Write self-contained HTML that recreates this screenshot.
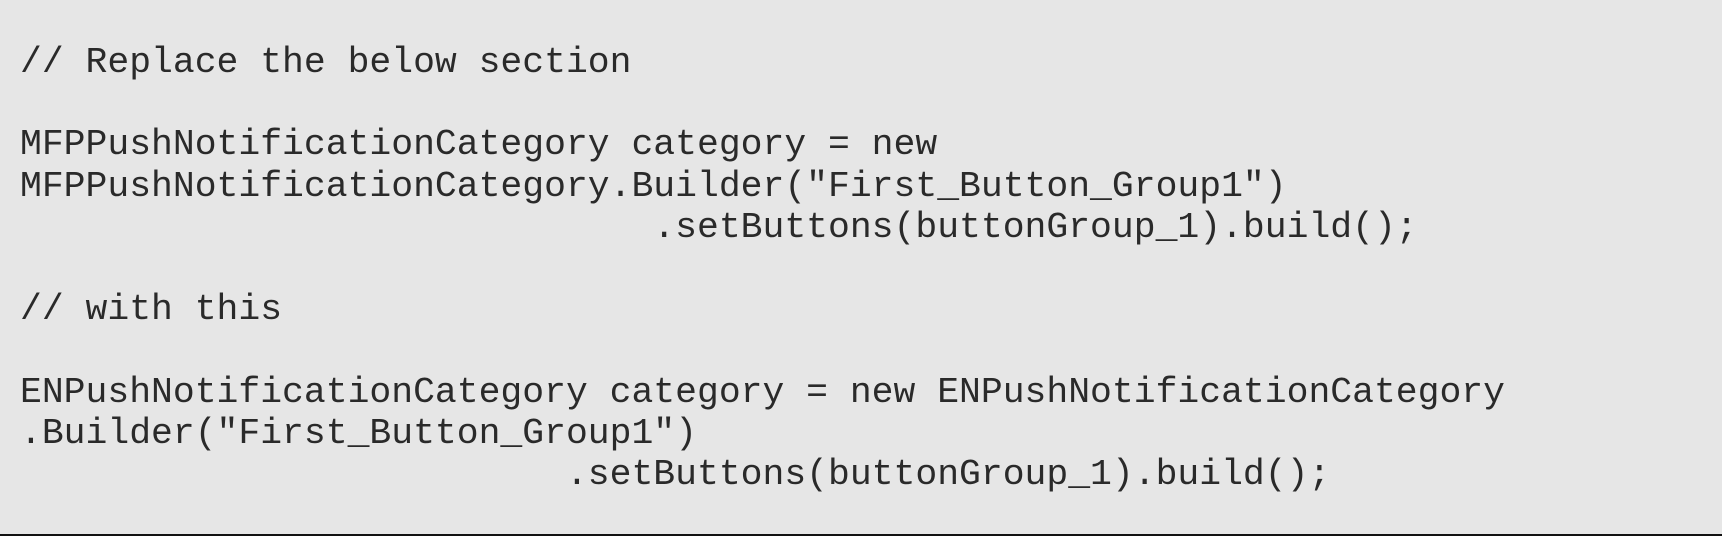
<!DOCTYPE html>
<html><head><meta charset="utf-8"><style>
html,body{margin:0;padding:0;}
body{width:1722px;height:536px;background:#e6e6e6;overflow:hidden;position:relative;}
pre{position:absolute;left:20px;top:42px;margin:0;font-family:"Liberation Mono",monospace;font-size:36.4px;line-height:41.2px;color:#2a2a2a;}
.b{position:absolute;left:0;bottom:0;width:1722px;height:2px;background:#111;}
</style></head><body>
<pre>// Replace the below section

MFPPushNotificationCategory category = new
MFPPushNotificationCategory.Builder("First_Button_Group1")
                             .setButtons(buttonGroup_1).build();

// with this

ENPushNotificationCategory category = new ENPushNotificationCategory
.Builder("First_Button_Group1")
                         .setButtons(buttonGroup_1).build();</pre>
<div class="b"></div>
</body></html>
